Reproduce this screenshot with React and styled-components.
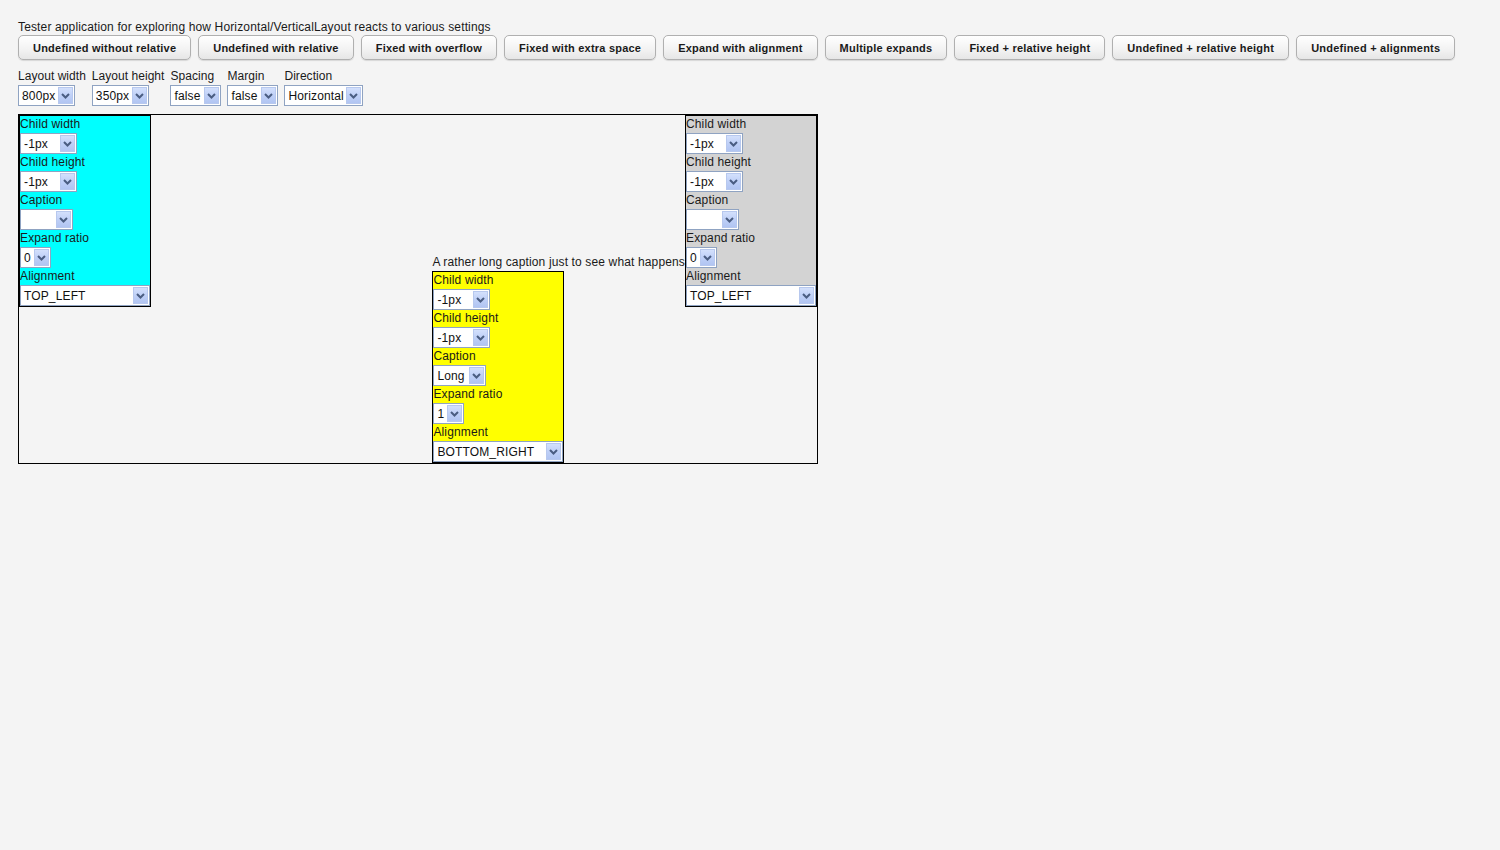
import React from 'react';
import styled, { createGlobalStyle } from 'styled-components';

const GlobalStyle = createGlobalStyle`
  html, body {
    margin: 0;
    padding: 0;
    background: #f4f4f4;
  }
  body {
    font-family: "Liberation Sans", Arial, sans-serif;
    font-size: 12px;
    letter-spacing: 0.14px;
    color: #1a1a1a;
  }
`;

const Page = styled.div`
  padding: 20px 18px;
  min-height: 850px;
  box-sizing: border-box;
`;

const Title = styled.div`
  line-height: 15px;
  height: 15px;
`;

const ButtonBar = styled.div`
  display: flex;
  gap: 7px;
`;

const Button = styled.button`
  height: 25px;
  padding: 0 14px;
  border: 1px solid #b0b0b0;
  border-radius: 5px;
  background: linear-gradient(#ffffff, #f2f2f2 60%, #e6e6e6);
  box-shadow: 0 1px 1px rgba(0, 0, 0, 0.12);
  font-family: "Liberation Sans", Arial, sans-serif;
  font-size: 11px;
  font-weight: bold;
  letter-spacing: 0.22px;
  color: #1a1a1a;
  cursor: pointer;
  white-space: nowrap;
`;

const Settings = styled.div`
  display: flex;
  gap: 6px;
  margin-top: 9px;
`;

const Field = styled.div`
  display: flex;
  flex-direction: column;
  align-items: flex-start;
`;

const TopLabel = styled.div`
  line-height: 15px;
  height: 16px;
  letter-spacing: 0.04px;
  white-space: nowrap;
`;

const SelectBox = styled.div`
  display: flex;
  align-items: center;
  width: ${(p) => p.$width}px;
  height: 21px;
  box-sizing: border-box;
  border: 1px solid #8fa3c2;
  background: #fff;
  padding: 1px;
`;

const SelectText = styled.span`
  flex: 1;
  padding-left: 2px;
  font-size: 12px;
  color: #111;
  white-space: nowrap;
  overflow: hidden;
`;

const ArrowBtn = styled.span`
  width: 15px;
  height: 17px;
  box-sizing: border-box;
  border: 1px solid #b7c8ee;
  background: linear-gradient(#d3e0fc, #bfd0f7 50%, #b1c5f2);
  display: flex;
  align-items: center;
  justify-content: center;
`;

const Select = ({ value, width }) => (
  <SelectBox $width={width}>
    <SelectText>{value}</SelectText>
    <ArrowBtn>
      <svg width="9" height="6" viewBox="0 0 9 6">
        <polyline points="1,1 4.5,4.5 8,1" fill="none" stroke="#4a5d82" strokeWidth="2" />
      </svg>
    </ArrowBtn>
  </SelectBox>
);

const LayoutArea = styled.div`
  margin-top: 8px;
  width: 800px;
  height: 350px;
  box-sizing: border-box;
  border: 1px solid #000;
  display: flex;
`;

const Slot = styled.div`
  display: flex;
  flex: ${(p) => (p.$expand ? 1 : '0 0 auto')};
  align-items: ${(p) => p.$valign};
  justify-content: ${(p) => p.$halign};
`;

const Captioned = styled.div`
  display: flex;
  flex-direction: column;
  align-items: flex-start;
`;

const Caption = styled.div`
  line-height: 17px;
  height: 17px;
  white-space: nowrap;
`;

const ChildBox = styled.div`
  width: 132px;
  box-sizing: border-box;
  border: 1px solid #000;
  background: ${(p) => p.$bg};
  display: flex;
  flex-direction: column;
`;

const ChildLabel = styled.div`
  line-height: 17px;
  height: 17px;
  white-space: nowrap;
`;

const buttons = [
  'Undefined without relative',
  'Undefined with relative',
  'Fixed with overflow',
  'Fixed with extra space',
  'Expand with alignment',
  'Multiple expands',
  'Fixed + relative height',
  'Undefined + relative height',
  'Undefined + alignments',
];

const settings = [
  { label: 'Layout width', value: '800px', width: 57 },
  { label: 'Layout height', value: '350px', width: 57 },
  { label: 'Spacing', value: 'false', width: 51 },
  { label: 'Margin', value: 'false', width: 51 },
  { label: 'Direction', value: 'Horizontal', width: 79 },
];

const Child = ({ bg, caption, ratio, alignment }) => (
  <ChildBox $bg={bg}>
    <ChildLabel>Child width</ChildLabel>
    <Select value="-1px" width={57} />
    <ChildLabel>Child height</ChildLabel>
    <Select value="-1px" width={57} />
    <ChildLabel>Caption</ChildLabel>
    <Select value={caption} width={53} />
    <ChildLabel>Expand ratio</ChildLabel>
    <Select value={ratio} width={31} />
    <ChildLabel>Alignment</ChildLabel>
    <Select value={alignment} width={130} />
  </ChildBox>
);

export default function App() {
  return (
    <Page>
      <GlobalStyle />
      <Title>Tester application for exploring how Horizontal/VerticalLayout reacts to various settings</Title>
      <ButtonBar>
        {buttons.map((b) => (
          <Button key={b}>{b}</Button>
        ))}
      </ButtonBar>
      <Settings>
        {settings.map((s) => (
          <Field key={s.label}>
            <TopLabel>{s.label}</TopLabel>
            <Select value={s.value} width={s.width} />
          </Field>
        ))}
      </Settings>
      <LayoutArea>
        <Slot $valign="flex-start" $halign="flex-start">
          <Child bg="#00ffff" caption="" ratio="0" alignment="TOP_LEFT" />
        </Slot>
        <Slot $expand $valign="flex-end" $halign="flex-end">
          <Captioned>
            <Caption>A rather long caption just to see what happens</Caption>
            <Child bg="#ffff00" caption="Long" ratio="1" alignment="BOTTOM_RIGHT" />
          </Captioned>
        </Slot>
        <Slot $valign="flex-start" $halign="flex-start">
          <Child bg="#d3d3d3" caption="" ratio="0" alignment="TOP_LEFT" />
        </Slot>
      </LayoutArea>
    </Page>
  );
}
